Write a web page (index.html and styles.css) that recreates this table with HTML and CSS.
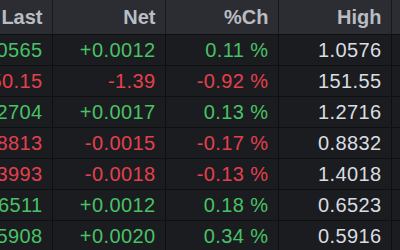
FILE: index.html
```html
<!DOCTYPE html>
<html>
<head>
<meta charset="utf-8">
<link rel="stylesheet" href="styles.css">
</head>
<body>
<div class="board">
  <table class="quotes">
    <colgroup>
      <col class="c"><col class="c"><col class="c"><col class="c"><col class="c-rest">
    </colgroup>
    <thead>
      <tr><th>Last</th><th>Net</th><th>%Ch</th><th>High</th><th></th></tr>
    </thead>
    <tbody>
      <tr><td class="up">1.0565</td><td class="up">+0.0012</td><td class="up">0.11 %</td><td class="val">1.0576</td><td></td></tr>
      <tr><td class="dn">150.15</td><td class="dn">-1.39</td><td class="dn">-0.92 %</td><td class="val">151.55</td><td></td></tr>
      <tr><td class="up">1.2704</td><td class="up">+0.0017</td><td class="up">0.13 %</td><td class="val">1.2716</td><td></td></tr>
      <tr><td class="dn">0.8813</td><td class="dn">-0.0015</td><td class="dn">-0.17 %</td><td class="val">0.8832</td><td></td></tr>
      <tr><td class="dn">1.3993</td><td class="dn">-0.0018</td><td class="dn">-0.13 %</td><td class="val">1.4018</td><td></td></tr>
      <tr><td class="up">0.6511</td><td class="up">+0.0012</td><td class="up">0.18 %</td><td class="val">0.6523</td><td></td></tr>
      <tr><td class="up">0.5908</td><td class="up">+0.0020</td><td class="up">0.34 %</td><td class="val">0.5916</td><td></td></tr>
    </tbody>
  </table>
</div>
</body>
</html>
```

FILE: styles.css
```css
html, body {
  margin: 0;
  padding: 0;
  background: #1b1c1f;
  overflow: hidden;
}
.board {
  width: 400px;
  height: 250px;
  overflow: hidden;
}
.quotes {
  width: 512px;
  margin-left: -61px;
  border-collapse: collapse;
  table-layout: fixed;
  font-family: "Liberation Sans", Arial, sans-serif;
  font-size: 20px;
}
.c { width: 113px; }
.c-rest { width: 60px; }
.quotes th, .quotes td {
  padding: 0 9px 0 0;
  text-align: right;
  white-space: nowrap;
  border-right: 1px solid #0e0f11;
}
.quotes th:last-child, .quotes td:last-child {
  border-right: none;
}
.quotes th {
  height: 33px;
  padding-top: 1px;
  background: #2b2d32;
  color: #b9bdc3;
  font-weight: bold;
  border-right: 1px solid #18191c;
  border-bottom: 1px solid #0e0f11;
}
.quotes td {
  height: 30px;
  letter-spacing: 0.4px;
  border-bottom: 1px solid #0f1012;
}
.up { color: #48c266; }
.dn { color: #e3404e; }
.val { color: #d9dde2; }
```
